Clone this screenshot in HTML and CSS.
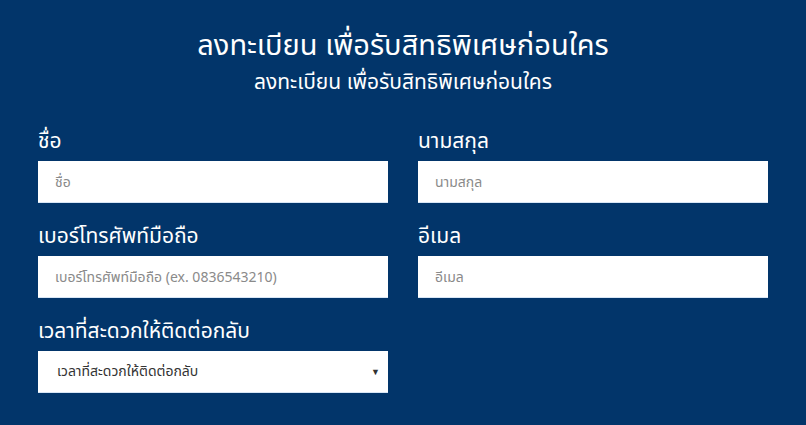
FILE: index.html
```html
<!DOCTYPE html>
<html lang="th">
<head>
<meta charset="utf-8">
<link rel="stylesheet" href="styles.css">
</head>
<body>
<section class="register">
  <h1 class="title">ลงทะเบียน เพื่อรับสิทธิพิเศษก่อนใคร</h1>
  <p class="subtitle">ลงทะเบียน เพื่อรับสิทธิพิเศษก่อนใคร</p>
  <form class="form">
    <div class="field">
      <label class="label">ชื่อ</label>
      <input class="input" type="text" placeholder="ชื่อ">
    </div>
    <div class="field">
      <label class="label">นามสกุล</label>
      <input class="input" type="text" placeholder="นามสกุล">
    </div>
    <div class="field">
      <label class="label">เบอร์โทรศัพท์มือถือ</label>
      <input class="input" type="text" placeholder="เบอร์โทรศัพท์มือถือ (ex. 0836543210)">
    </div>
    <div class="field">
      <label class="label">อีเมล</label>
      <input class="input" type="text" placeholder="อีเมล">
    </div>
    <div class="field">
      <label class="label">เวลาที่สะดวกให้ติดต่อกลับ</label>
      <div class="select">
        <span class="select-text">เวลาที่สะดวกให้ติดต่อกลับ</span>
        <span class="select-arrow">▼</span>
      </div>
    </div>
  </form>
</section>
</body>
</html>
```
FILE: styles.css
```css
html, body {
  margin: 0;
  padding: 0;
  background: #02356a;
  height: 100%;
}
body {
  font-family: "Noto Sans", "Noto Sans Thai", Loma, sans-serif;
  color: #fff;
}
.register {
  width: 730px;
  margin: 0 auto;
  padding-top: 24px;
}
.title {
  margin: 0;
  text-align: center;
  font-size: 29px;
  font-weight: 400;
  line-height: 40px;
}
.subtitle {
  margin: 2px 0 0;
  text-align: center;
  font-size: 21px;
  line-height: 30px;
}
.form {
  margin-top: 29px;
  display: grid;
  grid-template-columns: 350px 350px;
  column-gap: 30px;
  row-gap: 17px;
}
.field {
  display: flex;
  flex-direction: column;
}
.label {
  font-size: 21px;
  line-height: 30px;
  margin-bottom: 6px;
}
.input, .select {
  box-sizing: border-box;
  height: 42px;
  width: 100%;
  border: 0;
  border-bottom: 1px solid #d8e6f5;
  background: #fff;
  padding: 0 17px;
  font-family: inherit;
  font-size: 14px;
  color: #333;
  outline: none;
}
.input::placeholder {
  color: #8a8a8a;
}
.select {
  display: flex;
  align-items: center;
  justify-content: space-between;
  padding: 0 8px 0 19px;
}
.select-text {
  color: #333;
  font-size: 14px;
}
.select-arrow {
  font-size: 9px;
  color: #333;
}
```
